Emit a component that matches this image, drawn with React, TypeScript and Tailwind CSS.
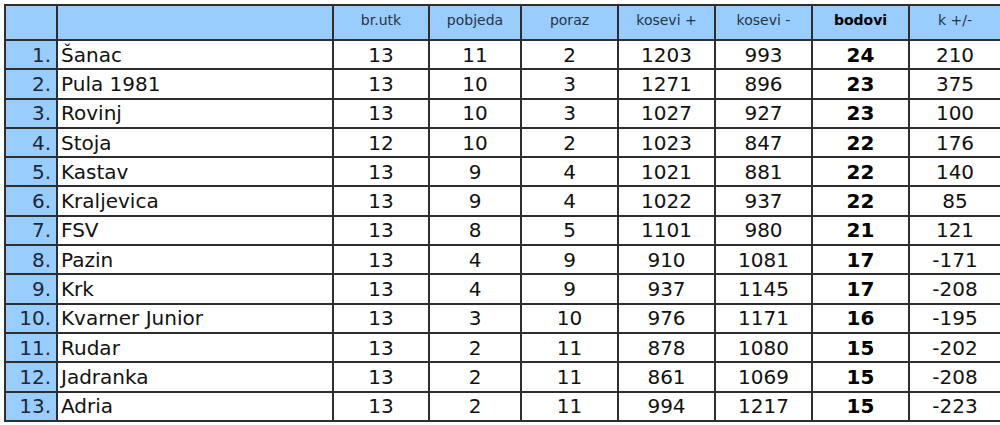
import React from 'react';

type Row = {
  name: string;
  utk: number;
  won: number;
  lost: number;
  plus: number;
  minus: number;
  pts: number;
  diff: number;
};

const rows: Row[] = [
  { name: 'Šanac', utk: 13, won: 11, lost: 2, plus: 1203, minus: 993, pts: 24, diff: 210 },
  { name: 'Pula 1981', utk: 13, won: 10, lost: 3, plus: 1271, minus: 896, pts: 23, diff: 375 },
  { name: 'Rovinj', utk: 13, won: 10, lost: 3, plus: 1027, minus: 927, pts: 23, diff: 100 },
  { name: 'Stoja', utk: 12, won: 10, lost: 2, plus: 1023, minus: 847, pts: 22, diff: 176 },
  { name: 'Kastav', utk: 13, won: 9, lost: 4, plus: 1021, minus: 881, pts: 22, diff: 140 },
  { name: 'Kraljevica', utk: 13, won: 9, lost: 4, plus: 1022, minus: 937, pts: 22, diff: 85 },
  { name: 'FSV', utk: 13, won: 8, lost: 5, plus: 1101, minus: 980, pts: 21, diff: 121 },
  { name: 'Pazin', utk: 13, won: 4, lost: 9, plus: 910, minus: 1081, pts: 17, diff: -171 },
  { name: 'Krk', utk: 13, won: 4, lost: 9, plus: 937, minus: 1145, pts: 17, diff: -208 },
  { name: 'Kvarner Junior', utk: 13, won: 3, lost: 10, plus: 976, minus: 1171, pts: 16, diff: -195 },
  { name: 'Rudar', utk: 13, won: 2, lost: 11, plus: 878, minus: 1080, pts: 15, diff: -202 },
  { name: 'Jadranka', utk: 13, won: 2, lost: 11, plus: 861, minus: 1069, pts: 15, diff: -208 },
  { name: 'Adria', utk: 13, won: 2, lost: 11, plus: 994, minus: 1217, pts: 15, diff: -223 },
];

const headers = ['br.utk', 'pobjeda', 'poraz', 'kosevi +', 'kosevi -', 'bodovi', 'k +/-'];

export default function App() {
  return (
    <div className="w-[1000px] h-[425px] bg-white pt-[4px] pl-[4px] overflow-hidden font-['DejaVu_Sans',sans-serif]">
      <table className="table-fixed border-collapse w-[996px] text-[#111]">
        <colgroup>
          <col className="w-[52px]" />
          <col className="w-[276px]" />
          <col className="w-[96px]" />
          <col className="w-[92px]" />
          <col className="w-[97px]" />
          <col className="w-[97px]" />
          <col className="w-[97px]" />
          <col className="w-[97px]" />
          <col className="w-[92px]" />
        </colgroup>
        <thead>
          <tr className="h-[35px] bg-[#99ccff]">
            <th className="border-2 border-[#2e2e2e]" />
            <th className="border-2 border-[#2e2e2e]" />
            {headers.map((h) => (
              <th
                key={h}
                className={`border-2 border-[#2e2e2e] align-top pt-[6px] text-[14px] leading-[16px] ${
                  h === 'bodovi' ? 'font-bold text-black' : 'font-normal text-[#2a3440]'
                }`}
              >
                {h}
              </th>
            ))}
          </tr>
        </thead>
        <tbody className="text-[20px] leading-[24px]">
          {rows.map((r, i) => (
            <tr key={r.name} className="h-[29.3px]">
              <td className="border-2 border-[#2e2e2e] bg-[#99ccff] text-right pr-[5px] text-[#1b2838]">
                {i + 1}.
              </td>
              <td className="border-2 border-[#2e2e2e] pl-[3px] text-left">{r.name}</td>
              <td className="border-2 border-[#2e2e2e] text-center">{r.utk}</td>
              <td className="border-2 border-[#2e2e2e] text-center">{r.won}</td>
              <td className="border-2 border-[#2e2e2e] text-center">{r.lost}</td>
              <td className="border-2 border-[#2e2e2e] text-center">{r.plus}</td>
              <td className="border-2 border-[#2e2e2e] text-center">{r.minus}</td>
              <td className="border-2 border-[#2e2e2e] text-center font-bold text-black">{r.pts}</td>
              <td className="border-2 border-[#2e2e2e] text-center">{r.diff}</td>
            </tr>
          ))}
        </tbody>
      </table>
    </div>
  );
}
